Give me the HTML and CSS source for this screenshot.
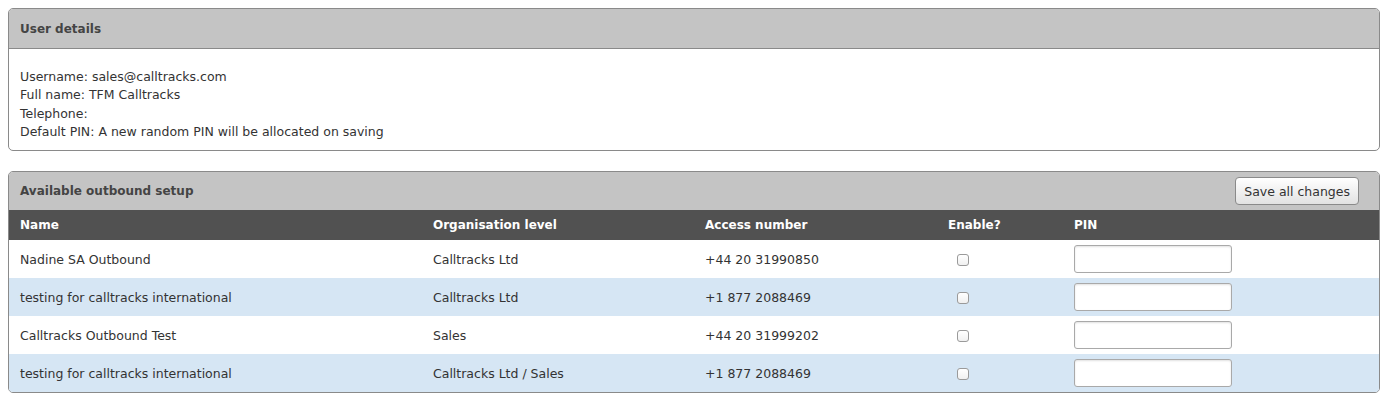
FILE: index.html
```html
<!DOCTYPE html>
<html lang="en">

<head>
    <meta charset="UTF-8">
    <title>User outbound setup</title>
    <link rel="stylesheet" href="styles.css">
</head>

<body>

    <div class="panel">
        <div class="panel-head">
            <h2>User details</h2>
        </div>
        <div class="panel-body details">
            Username: sales@calltracks.com<br>
            Full name: TFM Calltracks<br>
            Telephone:<br>
            Default PIN: A new random PIN will be allocated on saving
        </div>
    </div>

    <div class="panel">
        <div class="panel-head flush">
            <h2>Available outbound setup</h2>
            <button class="save">Save all changes</button>
        </div>
        <table class="grid">
            <colgroup>
                <col class="c-name">
                <col class="c-org">
                <col class="c-num">
                <col class="c-enable">
                <col>
            </colgroup>
            <thead>
                <tr>
                    <th>Name</th>
                    <th>Organisation level</th>
                    <th>Access number</th>
                    <th>Enable?</th>
                    <th>PIN</th>
                </tr>
            </thead>
            <tbody>
                <tr>
                    <td>Nadine SA Outbound</td>
                    <td>Calltracks Ltd</td>
                    <td>+44 20 31990850</td>
                    <td><input type="checkbox"></td>
                    <td><input type="text" class="pin"></td>
                </tr>
                <tr>
                    <td>testing for calltracks international</td>
                    <td>Calltracks Ltd</td>
                    <td>+1 877 2088469</td>
                    <td><input type="checkbox"></td>
                    <td><input type="text" class="pin"></td>
                </tr>
                <tr>
                    <td>Calltracks Outbound Test</td>
                    <td>Sales</td>
                    <td>+44 20 31999202</td>
                    <td><input type="checkbox"></td>
                    <td><input type="text" class="pin"></td>
                </tr>
                <tr>
                    <td>testing for calltracks international</td>
                    <td>Calltracks Ltd / Sales</td>
                    <td>+1 877 2088469</td>
                    <td><input type="checkbox"></td>
                    <td><input type="text" class="pin"></td>
                </tr>
            </tbody>
        </table>
    </div>

</body>

</html>
```

FILE: styles.css
```css
body {
    font-family: 'DejaVu Sans', 'Lucida Grande', sans-serif;
    font-size: 12.5px;
    color: #333;
    background-color: #fff;
    margin: 8px;
}

.panel {
    border: 1px solid #8a8a8a;
    border-radius: 5px;
    margin-bottom: 20px;
    overflow: hidden;
}

.panel-head {
    display: flex;
    align-items: center;
    justify-content: space-between;
    height: 39px;
    padding: 0 20px 0 11px;
    background-color: #c4c4c4;
    border-bottom: 1px solid #8a8a8a;
}

/* En-tete colle au tableau */
.panel-head.flush {
    height: 38px;
    border-bottom: none;
}

.panel-head h2 {
    margin: 0;
    font-size: 12px;
    font-weight: bold;
    color: #444;
}

.details {
    padding: 19px 11px 9px;
    line-height: 18.3px;
}

/* Bouton enregistrer */
button.save {
    height: 28px;
    padding: 0 8px;
    font-family: inherit;
    font-size: 12.5px;
    color: #333;
    background: linear-gradient(#ffffff, #e2e2e2);
    border: 1px solid #8a8a8a;
    border-radius: 4px;
    cursor: pointer;
}

.grid {
    width: 100%;
    border-collapse: collapse;
    table-layout: fixed;
}

.c-name { width: 413px; }
.c-org { width: 272px; }
.c-num { width: 243px; }
.c-enable { width: 126px; }

.grid th {
    height: 30px;
    padding: 0 11px;
    text-align: left;
    font-size: 12px;
    font-weight: bold;
    color: #fff;
    background-color: #515151;
}

.grid td {
    height: 38px;
    padding: 0 11px;
    white-space: nowrap;
}

.grid tbody tr:nth-child(even) {
    background-color: #d6e6f4;
}

.grid input[type="checkbox"] {
    appearance: none;
    width: 12px;
    height: 12px;
    margin: 0 0 0 9px;
    border: 1px solid #9a9a9a;
    border-radius: 3px;
    background: linear-gradient(#ffffff, #f0f0f0);
    vertical-align: middle;
}

input.pin {
    width: 158px;
    height: 28px;
    box-sizing: border-box;
    border: 1px solid #a9a9a9;
    border-radius: 3px;
    box-shadow: inset 0 1px 2px rgba(0, 0, 0, 0.12);
    vertical-align: middle;
}
```
